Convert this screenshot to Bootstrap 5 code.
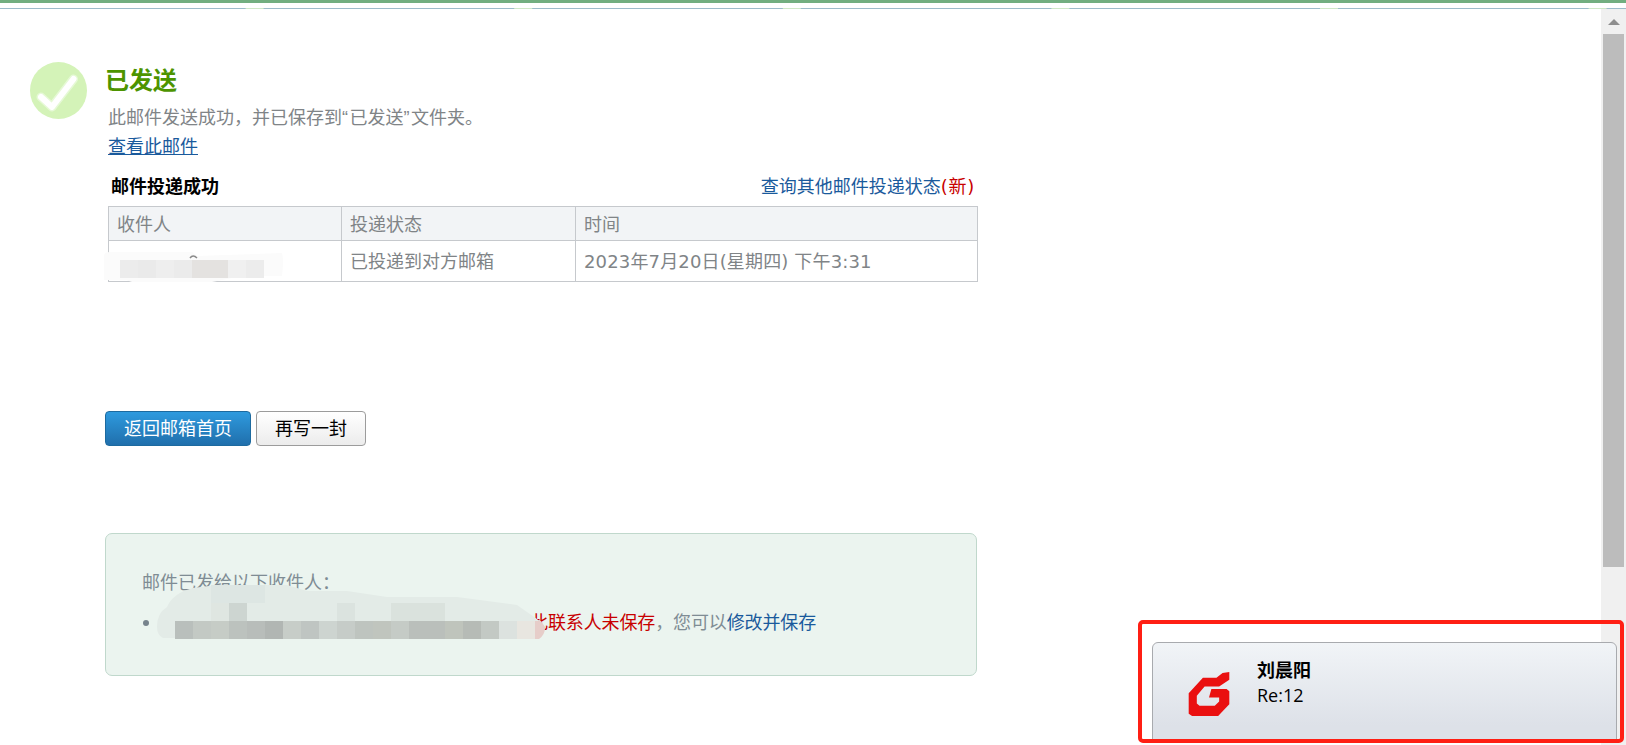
<!DOCTYPE html>
<html lang="zh-CN">
<head>
    <meta charset="UTF-8">
    <meta name="viewport" content="width=device-width, initial-scale=1.0">
    <title>已发送</title>
    <link href="https://cdn.jsdelivr.net/npm/bootstrap@5.3.0/dist/css/bootstrap.min.css" rel="stylesheet">
    <style>
        html, body { height: 745px; overflow: hidden; }
        body { font-family: "Liberation Sans", "Noto Sans CJK SC", sans-serif; font-size: 18px; line-height: 30px; color: #808487; background: #fff; position: relative; }
        a { color: #1a5a9c; }
        .top-strip { height: 9px; padding-top: 5px; border-top: 3px solid #72ae80; }
        .strip-line { height: 1px; background: linear-gradient(to right, #9dbccb 0 246px, #cfe8c8 246px 264px, #9dbccb 264px 268.6px) repeat-x; background-size: 268.6px 1px; }
        .page-area { height: 736px; }
        .mail-body { width: 1601px; padding: 51px 0 0 30px; }
        .ok-icon { width: 57px; height: 57px; margin-top: 2px; flex-shrink: 0; }
        .head-text { margin-left: 20px; padding-top: 4px; }
        .sent-title { font-size: 24px; font-weight: 700; color: #4d9400; line-height: 34px; margin: 0 0 5px -2px; }
        .sub-line { margin: 0 0 0 1px; }
        .view-line { line-height: 29px; }
        .quote-mark { letter-spacing: 1.5px; }
        .status-block { width: 870px; margin: 10px 0 0 78px; }
        .status-head { padding: 0 3px 0 3px; height: 30px; margin-bottom: 4px; }
        .status-head strong { color: #000; }
        .new-mark { color: #c80000; font-family: "DejaVu Sans", "Noto Sans CJK SC", sans-serif; letter-spacing: .7px; }
        .status-table { --bs-table-border-color: #c6c9cd; --bs-table-color: #808487; margin: 0; table-layout: fixed; }
        .status-table > :not(caption) > * > * { padding: 2px 8px 0; font-weight: 400; vertical-align: middle; }
        .status-table th { height: 34px; background: #f2f4f6; }
        .status-table td { height: 41px; }
        .date-cell { font-family: "DejaVu Sans", "Noto Sans CJK SC", sans-serif; letter-spacing: .15px; }
        .action-row { margin: 129px 0 0 75px; }
        .send-btn, .again-btn { font-size: 18px; line-height: 24px; height: 35px; padding: 4px 0; border-radius: 4px; }
        .send-btn { width: 146px; color: #fff; border: 1px solid #1d6a9f; background: linear-gradient(#2e9ade, #206fac); }
        .again-btn { width: 110px; margin-left: 5px; color: #000; border: 1px solid #9c9c9c; background: linear-gradient(#fff, #ececec); }
        .saved-box { width: 872px; height: 143px; margin: 87px 0 0 75px; padding: 34px 36px; background: #ebf4ef; border: 1px solid #c0d8cc; border-radius: 7px; color: #7f8c94; }
        .saved-box ul { margin: 10px 0 0; padding: 0 0 0 388px; list-style: none; position: relative; }
        .saved-box li { letter-spacing: -.12px; }
        .saved-box li::before { content: ""; position: absolute; left: 1px; top: 12px; width: 6px; height: 6px; border-radius: 50%; background: #76838c; }
        .warn-text { color: #c80000; }
        .fake-scroll { width: 25px; background: #f0f0f0; padding: 10px 2px 0; }
        .scroll-arrow { width: 0; height: 0; margin: 0 auto; border-left: 6px solid transparent; border-right: 6px solid transparent; border-bottom: 6px solid #8e8e8e; }
        .scroll-thumb { height: 533px; margin-top: 9px; background: #bcbcbc; }
        .blur-table { position: absolute; left: 102px; top: 250px; }
        .blur-box { position: absolute; left: 157px; top: 583px; }
        .toast-frame { position: absolute; left: 1138px; top: 620px; width: 486px; height: 123px; border: 4px solid #ff1f14; border-radius: 5px; padding: 18px 3px 0 10px; overflow: hidden; z-index: 5; }
        .toast-card { height: 120px; border: 1px solid #a8aaae; border-radius: 6px; background: linear-gradient(#f1f4f7, #dde1e8 70%); padding: 16px 0 0 35px; color: #000; line-height: 24px; }
        .g-logo { width: 42px; height: 44px; margin-top: 13px; flex-shrink: 0; filter: blur(.4px); }
        .toast-text { margin-left: 27px; }
        .toast-sub { font-family: "Open Sans", sans-serif; }
    </style>
</head>
<body>
<div class="top-strip"><div class="strip-line"></div></div>
<div class="page-area d-flex">
    <div class="mail-body">
        <div class="d-flex">
            <svg class="ok-icon" viewBox="0 0 57 57">
                <circle cx="28.5" cy="28.5" r="28.5" fill="#d4f3b8"/>
                <path d="M11 35 L22 45 L43.500 17" fill="none" stroke="#e6f9d6" stroke-width="9" stroke-linecap="round" stroke-linejoin="round"/>
                <path d="M11 35 L22 45 L43.500 17" fill="none" stroke="#fff" stroke-width="6" stroke-linecap="round" stroke-linejoin="round"/>
            </svg>
            <div class="head-text">
                <h1 class="sent-title">已发送</h1>
                <p class="sub-line">此邮件发送成功，并已保存到<span class="quote-mark">“</span>已发送<span class="quote-mark">”</span>文件夹。</p>
                <p class="sub-line view-line"><a href="#">查看此邮件</a></p>
            </div>
        </div>
        <div class="status-block">
            <div class="status-head d-flex justify-content-between">
                <strong>邮件投递成功</strong>
                <span><a href="#" class="text-decoration-none">查询其他邮件投递状态</a><span class="new-mark">(新)</span></span>
            </div>
            <table class="table table-bordered status-table">
                <thead>
                    <tr><th style="width:233px">收件人</th><th style="width:234px">投递状态</th><th>时间</th></tr>
                </thead>
                <tbody>
                    <tr><td></td><td>已投递到对方邮箱</td><td class="date-cell">2023年7月20日(星期四) 下午3:31</td></tr>
                </tbody>
            </table>
        </div>
        <div class="action-row d-flex">
            <button type="button" class="btn send-btn">返回邮箱首页</button>
            <button type="button" class="btn again-btn">再写一封</button>
        </div>
        <div class="saved-box">
            <div>邮件已发给以下收件人：</div>
            <ul>
                <li><span class="warn-text">此联系人未保存</span>，您可以<a href="#" class="text-decoration-none">修改并保存</a></li>
            </ul>
        </div>
    </div>
    <div class="fake-scroll">
        <div class="scroll-arrow"></div>
        <div class="scroll-thumb"></div>
    </div>
</div>

<svg class="blur-table" width="182" height="34" viewBox="0 0 182 34">
    <path d="M2 6 Q2 2 8 2 H90 L95 6 L180 3 Q182 10 180 26 H140 L110 32 H30 L24 30 H2 Z" fill="#fbfbfb"/>
    <path d="M88 8 Q91 4 95 8" fill="none" stroke="#8a8a8a" stroke-width="1.500"/>
    <rect x="18" y="10" width="18" height="18" fill="#ececec"/>
    <rect x="36" y="10" width="18" height="18" fill="#eaeaea"/>
    <rect x="54" y="10" width="18" height="18" fill="#eeeeee"/>
    <rect x="72" y="10" width="18" height="18" fill="#ebebeb"/>
    <rect x="90" y="10" width="36" height="18" fill="#e4e2e0"/>
    <rect x="126" y="10" width="18" height="18" fill="#f0f0f0"/>
    <rect x="144" y="10" width="18" height="18" fill="#ececec"/>
</svg>

<svg class="blur-box" width="392" height="56" viewBox="0 0 392 56">
    <path d="M0 44 Q0 30 10 24 Q16 10 36 5 L60 2 H130 L150 8 H190 L230 14 H300 L360 22 L380 36 L388 44 Q388 52 378 55 H6 Q0 52 0 44 Z" fill="#e3ebe7"/>
    <rect x="54" y="2" width="54" height="18" fill="#dde6e3"/>
    <rect x="54" y="20" width="18" height="18" fill="#dfe6e1"/>
    <rect x="72" y="20" width="18" height="18" fill="#cdd5d1"/>
    <rect x="180" y="20" width="18" height="18" fill="#dbe3df"/>
    <rect x="234" y="20" width="54" height="18" fill="#dae2dd"/>
    <rect x="18" y="38" width="18" height="18" fill="#b9bfbc"/>
    <rect x="36" y="38" width="18" height="18" fill="#c3c9c4"/>
    <rect x="54" y="38" width="18" height="18" fill="#c6ccc6"/>
    <rect x="72" y="38" width="18" height="18" fill="#bcc2be"/>
    <rect x="90" y="38" width="18" height="18" fill="#b8bdba"/>
    <rect x="108" y="38" width="18" height="18" fill="#b1b6b3"/>
    <rect x="126" y="38" width="18" height="18" fill="#c7cdc8"/>
    <rect x="144" y="38" width="18" height="18" fill="#bfc5c2"/>
    <rect x="162" y="38" width="18" height="18" fill="#cdd4d0"/>
    <rect x="180" y="38" width="18" height="18" fill="#c6ccc8"/>
    <rect x="198" y="38" width="18" height="18" fill="#bec4bf"/>
    <rect x="216" y="38" width="18" height="18" fill="#c0c5be"/>
    <rect x="234" y="38" width="18" height="18" fill="#c5cbc6"/>
    <rect x="252" y="38" width="36" height="18" fill="#babfbb"/>
    <rect x="288" y="38" width="18" height="18" fill="#bfc4bc"/>
    <rect x="306" y="38" width="18" height="18" fill="#b6bbb6"/>
    <rect x="324" y="38" width="18" height="18" fill="#c3c9c4"/>
    <rect x="342" y="38" width="18" height="18" fill="#dce2df"/>
    <rect x="360" y="38" width="18" height="18" fill="#e8e6e0"/>
    <path d="M378 38 H384 L388 44 Q388 52 382 56 H378 Z" fill="#e6cdc9"/>
</svg>

<div class="toast-frame">
    <div class="toast-card d-flex">
        <svg class="g-logo" viewBox="58 35 120 130">
            <path d="M178 35 L158 38 L140 52 L100 52 L58 98 L58 158 L68 165 L145 165 L178 130 L178 92 L170 85 L125 85 L118 110 L148 110 L148 122 L135 135 L90 135 L82 128 L82 105 L105 78 L148 78 L178 58 Z" fill="#ea1010"/>
        </svg>
        <div class="toast-text">
            <strong class="d-block">刘晨阳</strong>
            <span class="d-block toast-sub">Re:12</span>
        </div>
    </div>
</div>

<script src="https://cdn.jsdelivr.net/npm/bootstrap@5.3.0/dist/js/bootstrap.bundle.min.js"></script>
</body>
</html>
